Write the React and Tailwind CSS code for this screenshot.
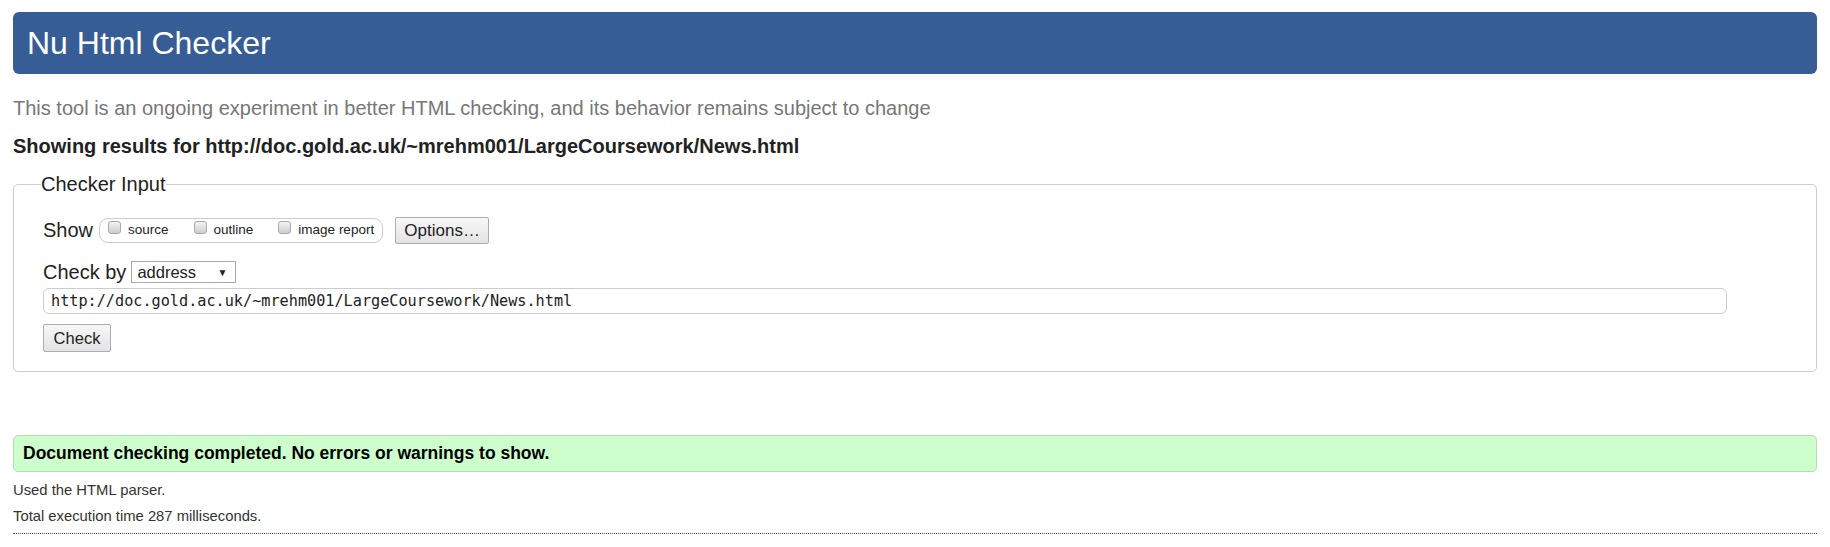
import React from 'react';

const URL = 'http://doc.gold.ac.uk/~mrehm001/LargeCoursework/News.html';

function ShowOption({ label }) {
  return (
    <label className="flex items-center mr-[25px] last:mr-0">
      <span className="-mt-[6px] w-[13px] h-[13px] rounded-[3px] border border-[#a8a8a8] bg-gradient-to-b from-[#f4f4f4] to-[#cdcdcd]" />
      <span className="ml-[7px] text-[13.5px] text-[#222]">{label}</span>
    </label>
  );
}

export default function App() {
  return (
    <div className="px-[13px] pt-[12px] font-['Liberation_Sans',Arial,sans-serif] text-[#222] bg-white min-h-[547px]">
      <header className="h-[62px] bg-[#365d95] rounded-[6px] flex items-center pl-[14px]">
        <h1 className="text-[32px] text-white leading-none">Nu Html Checker</h1>
      </header>

      <p className="mt-[23px] text-[20px] leading-[23px] text-[#777]">
        This tool is an ongoing experiment in better HTML checking, and its behavior remains subject to change
      </p>
      <p className="mt-[15px] text-[20px] leading-[23px] font-bold text-[#222]">
        Showing results for {URL}
      </p>

      <fieldset className="mt-[15px] border border-[#ccc] rounded-[5px] pl-[29px] pr-[20px] pb-[19px]">
        <legend className="-ml-[2px] text-[20px] leading-[23px] px-0 text-[#222]">Checker Input</legend>

        <div className="mt-[21px] h-[26px] flex items-center">
          <span className="text-[20px] mr-[6px]">Show</span>
          <div className="flex items-center h-[25px] border border-[#ccc] rounded-[9px] px-[8px]">
            <ShowOption label="source" />
            <ShowOption label="outline" />
            <ShowOption label="image report" />
          </div>
          <button className="ml-[12px] h-[27px] w-[94px] text-[17px] border border-[#adadad] bg-gradient-to-b from-[#f7f7f7] to-[#e3e3e3] rounded-[2px]">
            Options…
          </button>
        </div>

        <div className="mt-[16px] h-[26px] flex items-center">
          <span className="text-[20px] mr-[5px]">Check by</span>
          <div className="flex items-center justify-between w-[105px] h-[22px] border border-[#a9a9a9] pl-[5px] pr-[8px] text-[16.5px]">
            <span>address</span>
            <span className="text-[10px]">▼</span>
          </div>
        </div>

        <div className="mt-[3px] w-[1684px] h-[26px] flex items-center border border-[#ccc] rounded-[6px] pl-[7px] font-['DejaVu_Sans_Mono',monospace] text-[15.2px] text-[#222]">
          {URL}
        </div>

        <button className="mt-[10px] h-[28px] w-[68px] text-[16.5px] border border-[#adadad] bg-gradient-to-b from-[#f7f7f7] to-[#e3e3e3] rounded-[2px]">
          Check
        </button>
      </fieldset>

      <div className="mt-[63px] h-[37px] flex items-center pl-[9px] bg-[#ccffcc] border border-[#b5dcb5] rounded-[5px]">
        <span className="text-[17.5px] font-bold text-black">Document checking completed. No errors or warnings to show.</span>
      </div>

      <p className="mt-[5px] text-[14.8px] leading-[26px] text-[#333]">Used the HTML parser.</p>
      <p className="text-[14.8px] leading-[26px] text-[#333]">Total execution time 287 milliseconds.</p>
      <div className="mt-[4px] border-t border-dotted border-[#555]" />
    </div>
  );
}
